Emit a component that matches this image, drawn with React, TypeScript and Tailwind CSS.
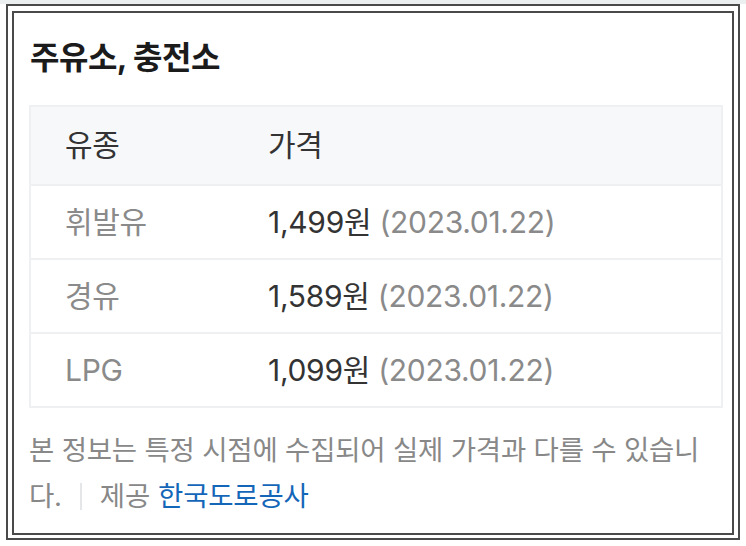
const rows = [
  { fuel: "휘발유", price: "1,499원", date: "(2023.01.22)" },
  { fuel: "경유", price: "1,589원", date: "(2023.01.22)" },
  { fuel: "LPG", price: "1,099원", date: "(2023.01.22)" },
];

export default function App() {
  return (
    <div
      className="h-[546px] w-[746px] overflow-hidden border-t-4 border-[#eceff0] bg-white"
      style={{ fontFamily: 'Inter, "Noto Sans CJK KR", sans-serif' }}
    >
      <div className="ml-[6px] h-[536px] w-[734px] border-2 border-[#4a4a4a] px-[4px] pb-[3px] pt-[5px]">
        <div className="h-full border-2 border-[#4a4a4a] pl-[15px] pr-[9px]">
          <h1 className="mt-[24px] pl-[1px] text-[32px] font-bold leading-[42px] tracking-[-0.5px] text-[#1b1b1b]">
            주유소, 충전소
          </h1>

          <div className="mt-[26px] border-2 border-[#eef0f2]">
            <div className="flex h-[77px] items-center bg-[#f7f8fa] text-[30px] tracking-[-0.3px] text-[#333]">
              <div className="w-[237px] pl-[34px]">유종</div>
              <div>가격</div>
            </div>
            {rows.map((r) => (
              <div
                key={r.fuel}
                className="flex h-[74px] items-center border-t-2 border-[#eef0f2] text-[30px] tracking-[-0.3px]"
              >
                <div className="w-[237px] pl-[34px] text-[#8a8a8a]">{r.fuel}</div>
                <div className="text-[#333]">
                  {r.price} <span className="text-[#8a8a8a]">{r.date}</span>
                </div>
              </div>
            ))}
          </div>

          <div className="mt-[19px] text-[27.5px] leading-[46px] tracking-[-0.2px] text-[#888]">
            <div>본 정보는 특정 시점에 수집되어 실제 가격과 다를 수 있습니</div>
            <div className="flex items-center">
              <span>다.</span>
              <span className="mx-[18px] h-[27px] w-[2px] bg-[#e4e6e8]" />
              <span>제공</span>
              <span className="ml-[8px] text-[#1466b8]">한국도로공사</span>
            </div>
          </div>
        </div>
      </div>
    </div>
  );
}
